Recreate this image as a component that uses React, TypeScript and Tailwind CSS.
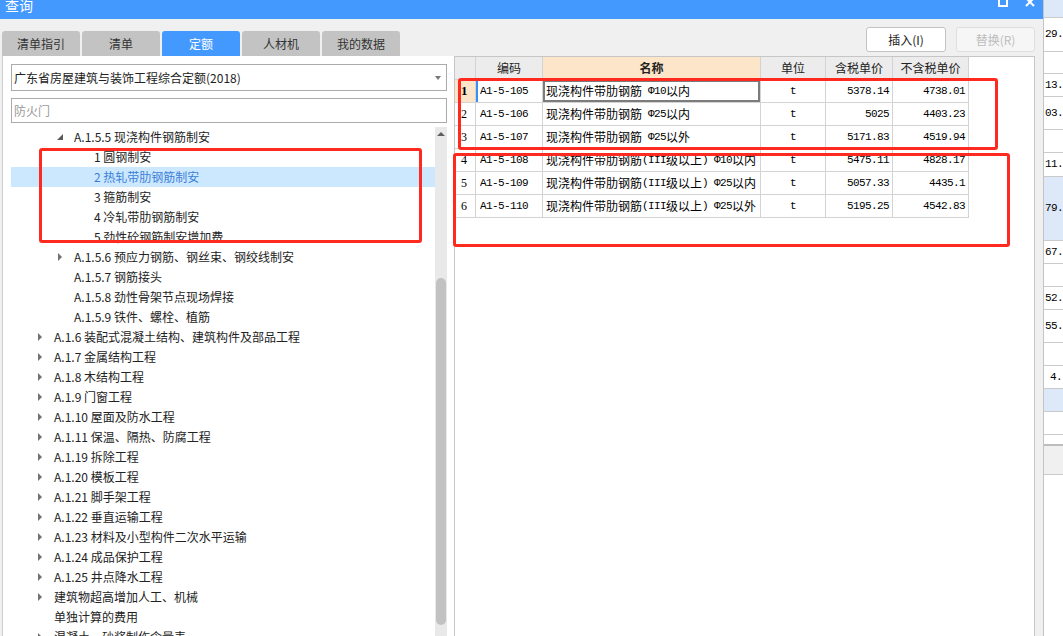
import React from "react";

type TreeNode = {
  label: string;
  pad: string;
  arrow?: "open" | "closed";
  selected?: boolean;
};

const tabs = ["清单指引", "清单", "定额", "人材机", "我的数据"];

const nodes: TreeNode[] = [
  { label: "A.1.5.5 现浇构件钢筋制安", pad: "pl-[43px]", arrow: "open" },
  { label: "1 圆钢制安", pad: "pl-[63px]" },
  { label: "2 热轧带肋钢筋制安", pad: "pl-[63px]", selected: true },
  { label: "3 箍筋制安", pad: "pl-[63px]" },
  { label: "4 冷轧带肋钢筋制安", pad: "pl-[63px]" },
  { label: "5 劲性砼钢筋制安增加费", pad: "pl-[63px]" },
  { label: "A.1.5.6 预应力钢筋、钢丝束、钢绞线制安", pad: "pl-[43px]", arrow: "closed" },
  { label: "A.1.5.7 钢筋接头", pad: "pl-[43px]" },
  { label: "A.1.5.8 劲性骨架节点现场焊接", pad: "pl-[43px]" },
  { label: "A.1.5.9 铁件、螺栓、植筋", pad: "pl-[43px]" },
  { label: "A.1.6 装配式混凝土结构、建筑构件及部品工程", pad: "pl-[23px]", arrow: "closed" },
  { label: "A.1.7 金属结构工程", pad: "pl-[23px]", arrow: "closed" },
  { label: "A.1.8 木结构工程", pad: "pl-[23px]", arrow: "closed" },
  { label: "A.1.9 门窗工程", pad: "pl-[23px]", arrow: "closed" },
  { label: "A.1.10 屋面及防水工程", pad: "pl-[23px]", arrow: "closed" },
  { label: "A.1.11 保温、隔热、防腐工程", pad: "pl-[23px]", arrow: "closed" },
  { label: "A.1.19 拆除工程", pad: "pl-[23px]", arrow: "closed" },
  { label: "A.1.20 模板工程", pad: "pl-[23px]", arrow: "closed" },
  { label: "A.1.21 脚手架工程", pad: "pl-[23px]", arrow: "closed" },
  { label: "A.1.22 垂直运输工程", pad: "pl-[23px]", arrow: "closed" },
  { label: "A.1.23 材料及小型构件二次水平运输", pad: "pl-[23px]", arrow: "closed" },
  { label: "A.1.24 成品保护工程", pad: "pl-[23px]", arrow: "closed" },
  { label: "A.1.25 井点降水工程", pad: "pl-[23px]", arrow: "closed" },
  { label: "建筑物超高增加人工、机械", pad: "pl-[23px]", arrow: "closed" },
  { label: "单独计算的费用", pad: "pl-[23px]" },
  { label: "混凝土、砂浆制作含量表", pad: "pl-[23px]", arrow: "closed" },
];

const rows = [
  ["1", "A1-5-105", "现浇构件带肋钢筋 Φ10以内", "t", "5378.14", "4738.01"],
  ["2", "A1-5-106", "现浇构件带肋钢筋 Φ25以内", "t", "5025", "4403.23"],
  ["3", "A1-5-107", "现浇构件带肋钢筋 Φ25以外", "t", "5171.83", "4519.94"],
  ["4", "A1-5-108", "现浇构件带肋钢筋(III级以上) Φ10以内", "t", "5475.11", "4828.17"],
  ["5", "A1-5-109", "现浇构件带肋钢筋(III级以上) Φ25以内", "t", "5057.33", "4435.1"],
  ["6", "A1-5-110", "现浇构件带肋钢筋(III级以上) Φ25以外", "t", "5195.25", "4542.83"],
];

const strip = [
  { h: "h-[18px] bg-[#dde8f8]", t: "" },
  { h: "h-[34px]", t: "29." },
  { h: "h-[22px]", t: "" },
  { h: "h-[23px]", t: "13." },
  { h: "h-[33px]", t: "03." },
  { h: "h-[23px]", t: "" },
  { h: "h-[24px]", t: "11." },
  { h: "h-[64px] bg-[#dde8f8]", t: "79." },
  { h: "h-[23px]", t: "67." },
  { h: "h-[23px]", t: "" },
  { h: "h-[23px]", t: "52." },
  { h: "h-[33px]", t: "55." },
  { h: "h-[23px]", t: "" },
  { h: "h-[23px] pl-[6px]", t: "4." },
  { h: "h-[23px] bg-[#dde8f8]", t: "" },
  { h: "h-[23px]", t: "" },
];

const mono = "font-['Liberation_Mono',monospace] text-[11px] tracking-[-0.6px]";

const Mixed = ({ text }: { text: string }) => (
  <>
    {text
      .split(/([\x20-\x7EΦ]+)/)
      .filter(Boolean)
      .map((part, i) =>
        /^[\x20-\x7EΦ]+$/.test(part) ? (
          <span key={i} className={mono + " whitespace-pre"}>
            {part}
          </span>
        ) : (
          <span key={i}>{part}</span>
        )
      )}
  </>
);

const Arrow = ({ kind }: { kind?: "open" | "closed" }) => {
  if (kind === "open")
    return (
      <div className="w-[20px] h-full flex items-center pl-[3px]">
        <div className="w-0 h-0 border-b-[6px] border-b-[#5a5a5a] border-l-[6px] border-l-transparent" />
      </div>
    );
  if (kind === "closed")
    return (
      <div className="w-[20px] h-full flex items-center pl-[4px]">
        <div className="w-0 h-0 border-y-[4px] border-y-transparent border-l-[4px] border-l-[#717171]" />
      </div>
    );
  return <div className="w-[20px]" />;
};

const App: React.FC = () => {
  return (
    <div className="relative w-[1063px] h-[636px] overflow-hidden flex bg-white font-['Noto_Sans_CJK_SC',sans-serif] text-[12px] text-[#222]">
      {/* dialog */}
      <div className="w-[1044px] h-full flex flex-col border-r border-[#c4c4c4]">
        <div className="h-[19px] bg-[#4499ff] flex items-start overflow-hidden text-white">
          <span className="ml-[5px] -mt-[3px] text-[14px] leading-[16px]">查询</span>
          <div className="ml-auto flex items-start">
            <div className="-mt-[3px] w-[10px] h-[10px] border-2 border-t-[3px] border-white" />
            <svg className="ml-[17px] mr-[8px] -mt-[3px]" width="10" height="10" viewBox="0 0 10 10">
              <path d="M1 1 L9 9 M9 1 L1 9" stroke="white" strokeWidth="2" />
            </svg>
          </div>
        </div>

        <div className="flex-1 min-h-0 flex bg-[#f0f0f0]">
          {/* left */}
          <div className="w-[454px] flex flex-col pt-[12px]">
            <div className="flex gap-[2px] pl-[2px] h-[25px]">
              {tabs.map((t) => (
                <div
                  key={t}
                  className={
                    t === "定额"
                      ? "w-[78px] rounded-t-[3px] bg-[#4499ff] text-white flex items-center justify-center"
                      : "w-[78px] rounded-t-[3px] bg-[#c3c3c3] text-[#333] flex items-center justify-center"
                  }
                >
                  {t}
                </div>
              ))}
            </div>
            <div className="flex-1 min-h-0 ml-[2px] border-l border-[#cdcdcd] bg-white flex flex-col pl-[8px] pt-[8px]">
              <div className="w-[436px] h-[27px] border border-[#ababab] flex items-center pl-[2px] pr-[5px]">
                <span>广东省房屋建筑与装饰工程综合定额(2018)</span>
                <div className="ml-auto w-0 h-0 border-x-[3px] border-x-transparent border-t-[4px] border-t-[#777]" />
              </div>
              <div className="mt-[7px] w-[436px] h-[25px] border border-[#ababab] flex items-center pl-[2px] text-[#9a9a9a]">
                防火门
              </div>
              <div className="mt-[4px] flex flex-1 min-h-0">
                <div className="w-[424px] flex flex-col overflow-hidden">
                  {nodes.map((n) => (
                    <div
                      key={n.label}
                      className={
                        "shrink-0 flex items-center h-[20px] whitespace-nowrap " +
                        n.pad +
                        (n.selected ? " bg-[#cce8ff] text-[#3c7fd8]" : "")
                      }
                    >
                      <Arrow kind={n.arrow} />
                      <span>{n.label}</span>
                    </div>
                  ))}
                </div>
                <div className="w-[12px] bg-[#e9e9e9] flex flex-col items-center">
                  <div className="mt-[5px] w-0 h-0 border-x-[4px] border-x-transparent border-b-[4px] border-b-[#606060]" />
                  <div className="mt-[142px] w-[10px] h-[347px] rounded-[5px] bg-[#c2c2c2]" />
                </div>
              </div>
            </div>
          </div>

          {/* right */}
          <div className="flex-1 flex flex-col pr-[8px]">
            <div className="pt-[8px] h-[33px] flex justify-end gap-[10px]">
              <div className="w-[80px] h-[25px] rounded-[3px] border border-[#c3c3c3] bg-white flex items-center justify-center text-[#222]">
                插入(I)
              </div>
              <div className="w-[79px] h-[25px] rounded-[3px] border border-[#dedede] bg-[#f6f6f6] flex items-center justify-center text-[#bdbdbd]">
                替换(R)
              </div>
            </div>
            <div className="mt-[4px] flex-1 border border-b-0 border-[#c6c6c6] bg-white">
              <div className="flex h-[23px] bg-[#ececec] w-fit">
                <div className="w-[21px] border-r border-b border-[#d3d3d3]" />
                <div className="w-[67px] border-r border-b border-[#d3d3d3] flex items-center justify-center">编码</div>
                <div className="w-[218px] border-r border-b border-[#d3d3d3] bg-[#fde5c9] flex items-center justify-center font-bold">名称</div>
                <div className="w-[65px] border-r border-b border-[#d3d3d3] flex items-center justify-center">单位</div>
                <div className="w-[67px] border-r border-b border-[#d3d3d3] flex items-center justify-center">含税单价</div>
                <div className="w-[76px] border-r border-b border-[#d3d3d3] flex items-center justify-center">不含税单价</div>
              </div>
              {rows.map((r, i) => (
                <div key={r[0]} className="flex h-[23px] w-fit text-black">
                  <div
                    className={
                      i === 0
                        ? "w-[21px] border-r border-b border-[#d3d3d3] bg-[#fde5c9] flex items-center pl-[6px] font-bold font-['Liberation_Serif',serif] text-[13px]"
                        : "w-[21px] border-r border-b border-[#d3d3d3] flex items-center pl-[6px] font-['Liberation_Serif',serif] text-[12px]"
                    }
                  >
                    {r[0]}
                  </div>
                  <div
                    className={
                      "w-[67px] border-r border-b border-[#d3d3d3] flex items-center pl-[4px] " +
                      mono +
                      (i === 0 ? " shadow-[inset_2px_0_0_#3a8ef6]" : "")
                    }
                  >
                    {r[1]}
                  </div>
                  <div
                    className={
                      "w-[218px] border-r border-b border-[#d3d3d3] flex items-center pl-[3px] whitespace-nowrap overflow-hidden" +
                      (i === 0 ? " shadow-[inset_0_0_0_2px_#7c7c7c]" : "")
                    }
                  >
                    <Mixed text={r[2]} />
                  </div>
                  <div className={"w-[65px] border-r border-b border-[#d3d3d3] flex items-center justify-center " + mono}>
                    {r[3]}
                  </div>
                  <div className={"w-[67px] border-r border-b border-[#d3d3d3] flex items-center justify-end pr-[3px] " + mono}>
                    {r[4]}
                  </div>
                  <div className={"w-[76px] border-r border-b border-[#d3d3d3] flex items-center justify-end pr-[3px] " + mono}>
                    {r[5]}
                  </div>
                </div>
              ))}
            </div>
          </div>
        </div>
      </div>

      {/* window behind */}
      <div className="flex-1 flex flex-col overflow-hidden text-black">
        {strip.map((s, i) => (
          <div key={i} className={"shrink-0 flex items-center border-b border-[#cacaca] pl-[1px] whitespace-nowrap " + mono + " " + s.h}>
            {s.t}
          </div>
        ))}
        <div className="shrink-0 h-[11px] border-b-2 border-[#bdbdbd]" />
        <div className="shrink-0 h-[29px] bg-[#f0f0f0] border-b border-[#cacaca]" />
      </div>

      {/* red annotation boxes */}
      <div className="absolute left-[39px] top-[148px] w-[383px] h-[95px] border-[3px] border-[#ff2a1f] rounded-[3px]" />
      <div className="absolute left-[458px] top-[78px] w-[540px] h-[72px] border-[3px] border-[#ff2a1f] rounded-[3px]" />
      <div className="absolute left-[453px] top-[153px] w-[557px] h-[94px] border-[3px] border-[#ff2a1f] rounded-[3px]" />
    </div>
  );
};

export default App;
